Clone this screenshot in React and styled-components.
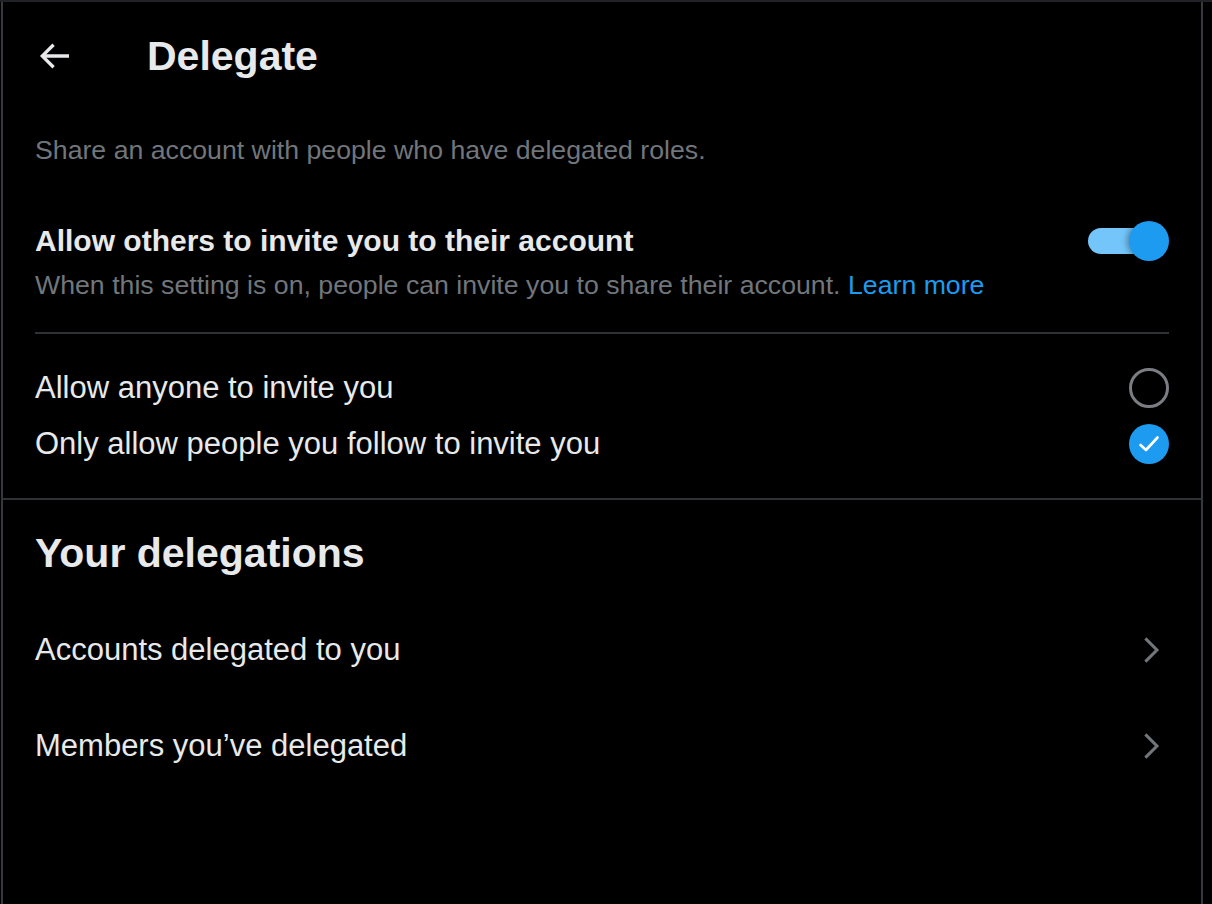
import React from "react";
import styled, { createGlobalStyle } from "styled-components";

const Global = createGlobalStyle`
  html, body { margin: 0; padding: 0; background: #000; }
  body { font-family: "Liberation Sans", Arial, sans-serif; color: #e7e9ea; }
  * { box-sizing: border-box; }
`;

const Page = styled.div`
  width: 1212px;
  height: 904px;
  background: #000;
  border-top: 2px solid #202226;
  overflow: hidden;
`;

const Column = styled.main`
  margin-left: 1px;
  width: 1202px;
  height: 902px;
  border-left: 2px solid #35383c;
  border-right: 2px solid #35383c;
  display: flex;
  flex-direction: column;
`;

const Header = styled.header`
  height: 108px;
  display: flex;
  align-items: center;
  padding-left: 31px;
`;

const BackButton = styled.button`
  width: 40px;
  height: 40px;
  padding: 0;
  border: none;
  background: transparent;
  color: #e7e9ea;
  display: flex;
  align-items: center;
  justify-content: center;
  margin-right: 73px;
  cursor: pointer;
`;

const Title = styled.h1`
  margin: 0;
  font-size: 41px;
  font-weight: 700;
  line-height: 48px;
  color: #e7e9ea;
`;

const Section = styled.section`
  padding: 0 32px;
  display: flex;
  flex-direction: column;
`;

const Secondary = styled.p`
  margin: 0;
  font-size: 26.7px;
  line-height: 32px;
  color: #71767b;
  padding-top: ${(p) => p.$top || 0}px;
`;

const Link = styled.a`
  color: #1d9bf0;
  text-decoration: none;
`;

const ToggleRow = styled.div`
  display: flex;
  align-items: flex-start;
  justify-content: space-between;
  margin-top: 55px;
  padding-bottom: 31px;
  border-bottom: 2px solid #2f3336;
`;

const ToggleText = styled.div`
  display: flex;
  flex-direction: column;
  gap: 8px;
`;

const BoldLabel = styled.div`
  font-size: 30px;
  font-weight: 700;
  line-height: 40px;
  color: #e7e9ea;
`;

const Switch = styled.div`
  position: relative;
  width: 81px;
  height: 40px;
  flex-shrink: 0;
  display: flex;
  align-items: center;
`;

const Track = styled.div`
  width: 62px;
  height: 26px;
  border-radius: 13px;
  background: #74c6fa;
`;

const Thumb = styled.div`
  position: absolute;
  right: 0;
  top: 0;
  width: 40px;
  height: 40px;
  border-radius: 50%;
  background: #1d9bf0;
  box-shadow: -2px 0 6px rgba(0, 0, 0, 0.35);
`;

const RadioList = styled.div`
  display: flex;
  flex-direction: column;
  padding: 26px 0;
`;

const OptionRow = styled.label`
  height: 56px;
  display: flex;
  align-items: center;
  justify-content: space-between;
  font-size: 31px;
  color: #e7e9ea;
  cursor: pointer;
`;

const Radio = styled.span`
  width: 40px;
  height: 40px;
  border-radius: 50%;
  border: ${(p) => (p.$checked ? "none" : "3px solid #7a7e83")};
  background: ${(p) => (p.$checked ? "#1d9bf0" : "transparent")};
  display: flex;
  align-items: center;
  justify-content: center;
`;

const FullDivider = styled.hr`
  margin: 0;
  border: none;
  border-top: 2px solid #2f3336;
`;

const SubTitle = styled.h2`
  margin: 29px 0 25px;
  font-size: 41px;
  font-weight: 700;
  line-height: 48px;
  color: #e7e9ea;
`;

const NavRow = styled.a`
  height: 96px;
  display: flex;
  align-items: center;
  justify-content: space-between;
  font-size: 31px;
  color: #e7e9ea;
  text-decoration: none;
  cursor: pointer;
`;

const Chevron = styled.svg`
  width: 36px;
  height: 36px;
  fill: #71767b;
`;

const BackArrow = () => (
  <svg width="40" height="40" viewBox="0 0 24 24" fill="currentColor">
    <path d="M7.414 13l5.043 5.04-1.414 1.42L3.586 12l7.457-7.46 1.414 1.42L7.414 11H21v2H7.414z" />
  </svg>
);

const ChevronRight = () => (
  <Chevron viewBox="0 0 24 24">
    <path d="M14.586 12L7.543 4.96l1.414-1.42L17.414 12l-8.457 8.46-1.414-1.42L14.586 12z" />
  </Chevron>
);

const Check = () => (
  <svg width="22" height="18" viewBox="0 0 22 18" fill="none">
    <path d="M2.5 10 L8 15 L19.5 2.5" stroke="#fff" strokeWidth="2.6" strokeLinecap="round" strokeLinejoin="round" />
  </svg>
);

export default function App() {
  return (
    <>
      <Global />
      <Page>
        <Column>
          <Header>
            <BackButton aria-label="Back">
              <BackArrow />
            </BackButton>
            <Title>Delegate</Title>
          </Header>
          <Section>
            <Secondary $top={24}>Share an account with people who have delegated roles.</Secondary>
            <ToggleRow>
              <ToggleText>
                <BoldLabel>Allow others to invite you to their account</BoldLabel>
                <Secondary>
                  When this setting is on, people can invite you to share their account.{" "}
                  <Link href="#">Learn more</Link>
                </Secondary>
              </ToggleText>
              <Switch>
                <Track />
                <Thumb />
              </Switch>
            </ToggleRow>
            <RadioList>
              <OptionRow>
                Allow anyone to invite you
                <Radio />
              </OptionRow>
              <OptionRow>
                Only allow people you follow to invite you
                <Radio $checked>
                  <Check />
                </Radio>
              </OptionRow>
            </RadioList>
          </Section>
          <FullDivider />
          <Section>
            <SubTitle>Your delegations</SubTitle>
            <NavRow href="#">
              Accounts delegated to you
              <ChevronRight />
            </NavRow>
            <NavRow href="#">
              Members you’ve delegated
              <ChevronRight />
            </NavRow>
          </Section>
        </Column>
      </Page>
    </>
  );
}
